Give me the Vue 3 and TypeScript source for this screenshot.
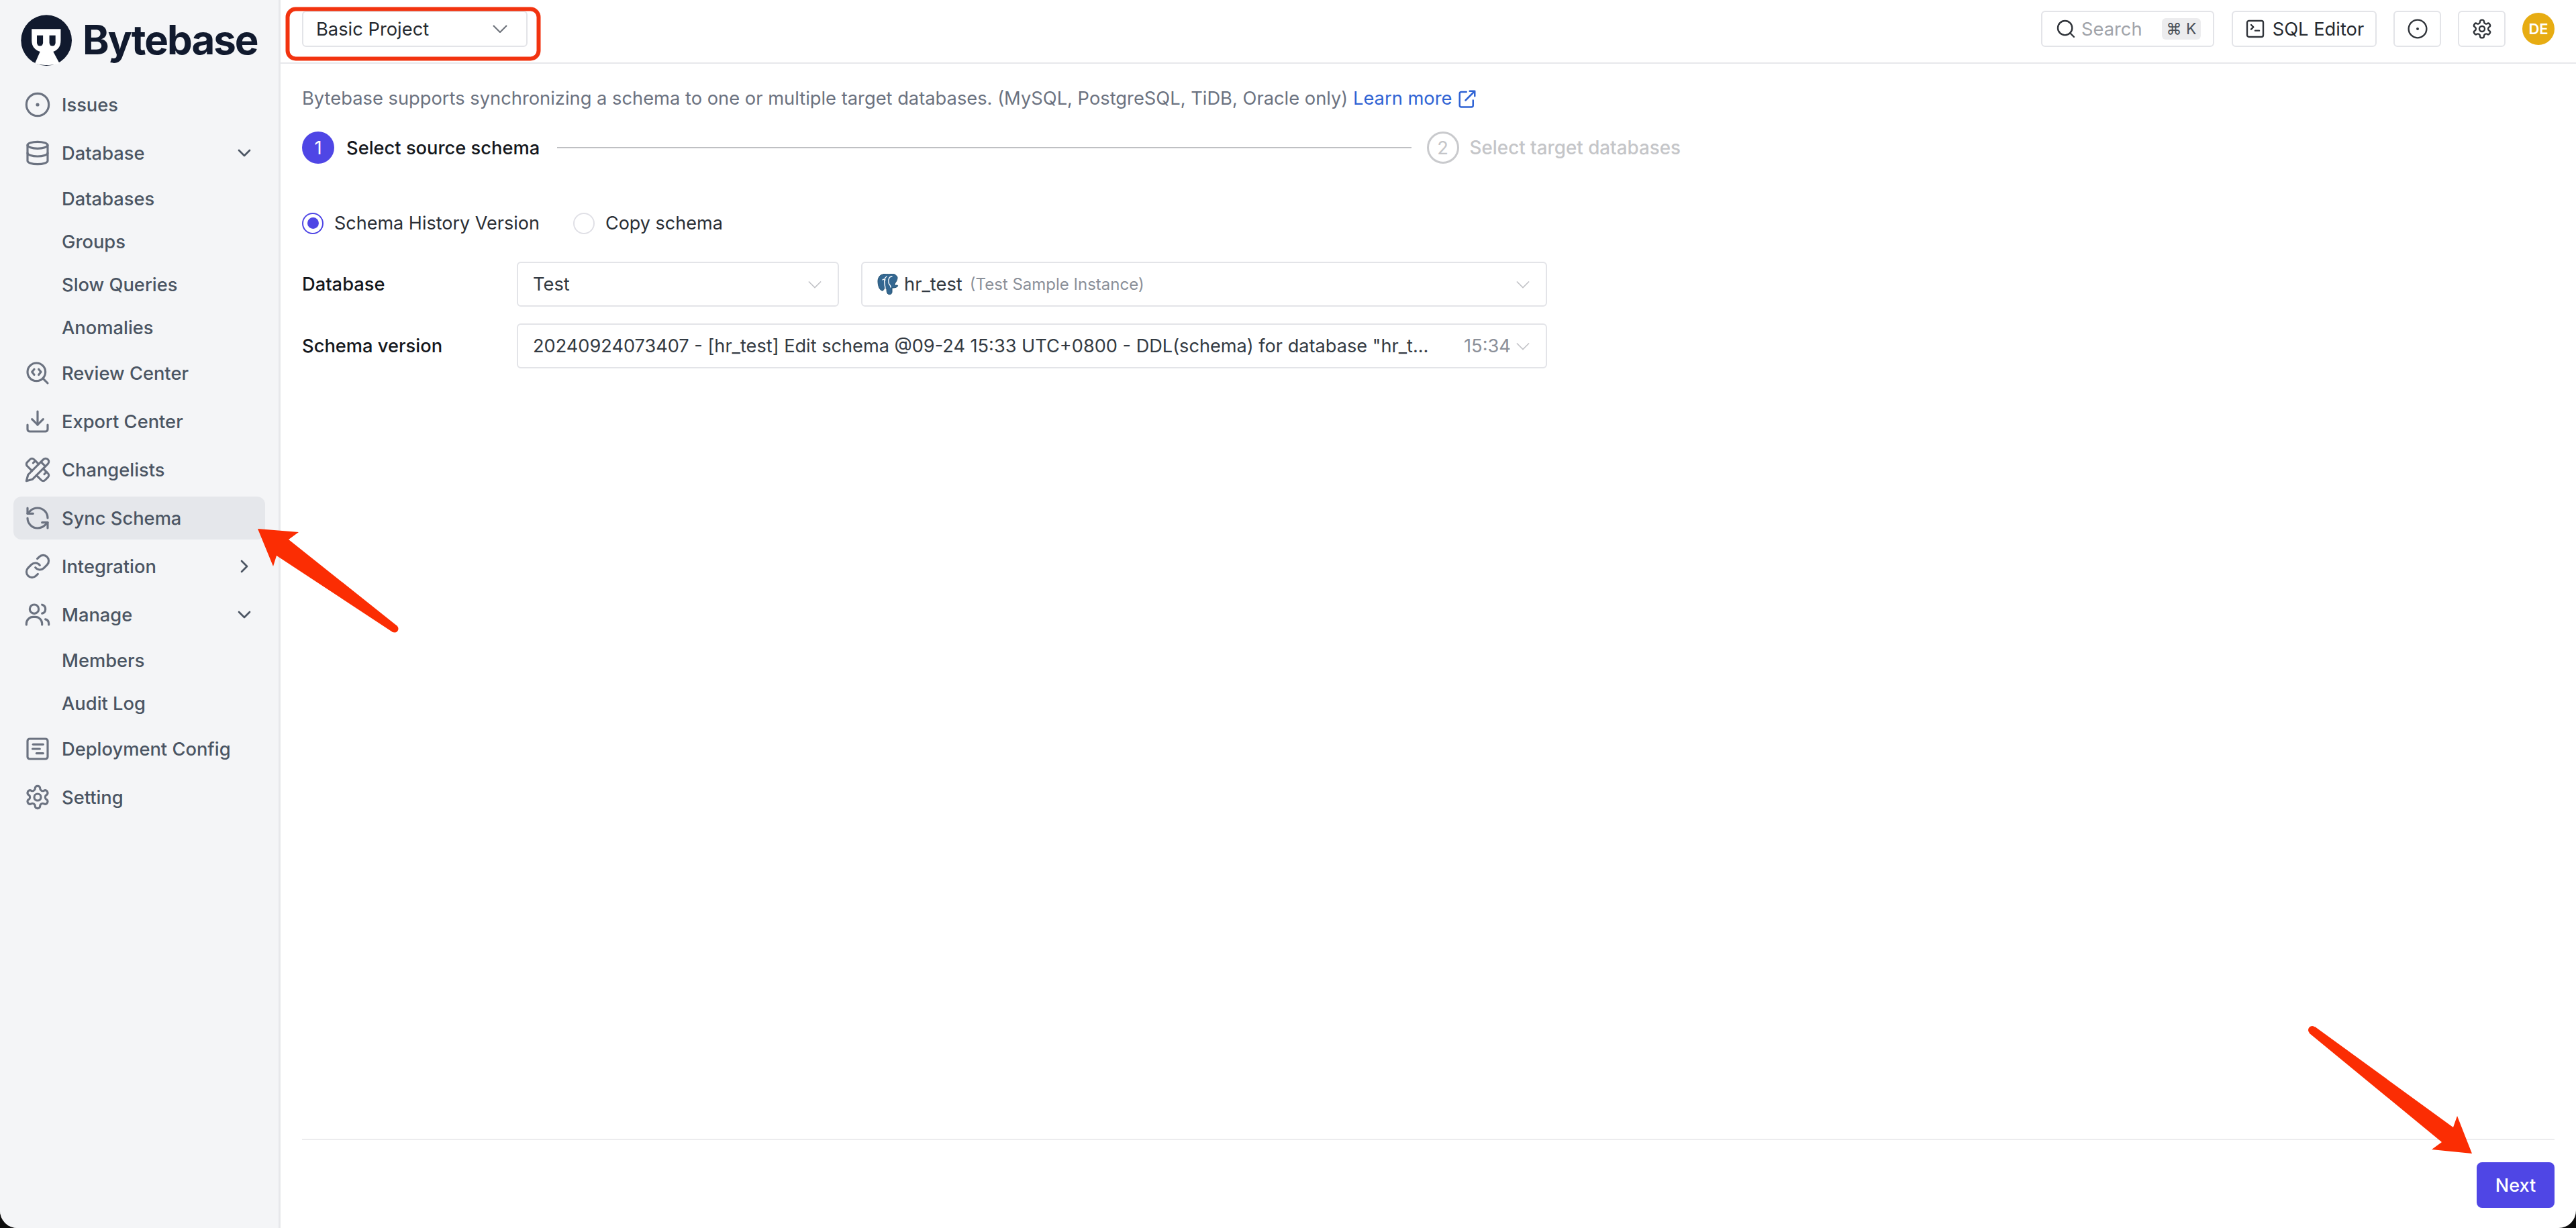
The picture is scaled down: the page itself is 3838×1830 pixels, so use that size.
<script setup lang="ts">
interface NavItem {
  label: string
  icon?: string
  chevron?: 'down' | 'right'
  active?: boolean
  sub?: string[]
}

const circle = (cx: number, cy: number, r: number): string =>
  `M${cx - r} ${cy}a${r} ${r} 0 1 0 ${2 * r} 0a${r} ${r} 0 1 0 ${-2 * r} 0`

const icons: Record<string, string[]> = {
  dot: [circle(12, 12, 10), circle(12, 12, 0.6)],
  database: ['M3 5a9 3 0 1 0 18 0a9 3 0 1 0-18 0', 'M3 5V19A9 3 0 0 0 21 19V5', 'M3 12A9 3 0 0 0 21 12'],
  review: ['m13 13.5 2-2.5-2-2.5', 'm21 21-4.3-4.3', 'M9 8.5 7 11l2 2.5', circle(11, 11, 8)],
  export: ['M21 15v4a2 2 0 0 1-2 2H5a2 2 0 0 1-2-2v-4', 'M7 10l5 5 5-5', 'M12 15V3'],
  change: [
    'm15 5 4 4',
    'M13 7 8.7 2.7a2.41 2.41 0 0 0-3.4 0L2.7 5.3a2.41 2.41 0 0 0 0 3.4L7 13',
    'm8 6 2-2',
    'm2 22 5.5-1.5L21.17 6.83a2.82 2.82 0 0 0-4-4L3.5 16.5Z',
    'm18 16 2-2',
    'm17 11 4.3 4.3c.94.94.94 2.46 0 3.4l-2.6 2.6c-.94.94-2.46.94-3.4 0L11 17',
  ],
  sync: [
    'M21 12a9 9 0 0 0-9-9 9.75 9.75 0 0 0-6.74 2.74L3 8',
    'M3 3v5h5',
    'M3 12a9 9 0 0 0 9 9 9.75 9.75 0 0 0 6.74-2.74L21 16',
    'M16 16h5v5',
  ],
  link: [
    'M10 13a5 5 0 0 0 7.54.54l3-3a5 5 0 0 0-7.07-7.07l-1.72 1.71',
    'M14 11a5 5 0 0 0-7.54-.54l-3 3a5 5 0 0 0 7.07 7.07l1.71-1.71',
  ],
  users: [
    'M2 21v-1a6 6 0 0 1 6-6h2a6 6 0 0 1 6 6v1',
    circle(9, 7, 4),
    'M22 21v-1a4 4 0 0 0-3-3.87',
    'M16 3.13a4 4 0 0 1 0 7.75',
  ],
  config: ['M5 3h14a2 2 0 0 1 2 2v14a2 2 0 0 1-2 2H5a2 2 0 0 1-2-2V5a2 2 0 0 1 2-2z', 'M8 8h9', 'M7.500 12h6.500', 'M11 16h6'],
  gear: [
    'M12.22 2h-.44a2 2 0 0 0-2 2v.18a2 2 0 0 1-1 1.73l-.43.25a2 2 0 0 1-2 0l-.15-.08a2 2 0 0 0-2.73.73l-.22.38a2 2 0 0 0 .73 2.73l.15.1a2 2 0 0 1 1 1.72v.51a2 2 0 0 1-1 1.74l-.15.09a2 2 0 0 0-.73 2.73l.22.38a2 2 0 0 0 2.73.73l.15-.08a2 2 0 0 1 2 0l.43.25a2 2 0 0 1 1 1.73V20a2 2 0 0 0 2 2h.44a2 2 0 0 0 2-2v-.18a2 2 0 0 1 1-1.73l.43-.25a2 2 0 0 1 2 0l.15.08a2 2 0 0 0 2.73-.73l.22-.39a2 2 0 0 0-.73-2.73l-.15-.08a2 2 0 0 1-1-1.74v-.5a2 2 0 0 1 1-1.74l.15-.09a2 2 0 0 0 .73-2.73l-.22-.38a2 2 0 0 0-2.73-.73l-.15.08a2 2 0 0 1-2 0l-.43-.25a2 2 0 0 1-1-1.73V4a2 2 0 0 0-2-2z',
    circle(12, 12, 3),
  ],
  search: [circle(11, 11, 8), 'm21 21-4.3-4.3'],
  terminal: ['M5 3h14a2 2 0 0 1 2 2v14a2 2 0 0 1-2 2H5a2 2 0 0 1-2-2V5a2 2 0 0 1 2-2z', 'm7.500 7.500 2.500 2.500-2.500 2.500', 'M12 14h4.500'],
}

const nav: NavItem[] = [
  { label: 'Issues', icon: 'dot' },
  { label: 'Database', icon: 'database', chevron: 'down', sub: ['Databases', 'Groups', 'Slow Queries', 'Anomalies'] },
  { label: 'Review Center', icon: 'review' },
  { label: 'Export Center', icon: 'export' },
  { label: 'Changelists', icon: 'change' },
  { label: 'Sync Schema', icon: 'sync', active: true },
  { label: 'Integration', icon: 'link', chevron: 'right' },
  { label: 'Manage', icon: 'users', chevron: 'down', sub: ['Members', 'Audit Log'] },
  { label: 'Deployment Config', icon: 'config' },
  { label: 'Setting', icon: 'gear' },
]

const versionText = '20240924073407 - [hr_test] Edit schema @09-24 15:33 UTC+0800 - DDL(schema) for database "hr_t...'
</script>

<template>
  <div class="app">
    <aside class="sidebar">
      <div class="brand">
        <svg class="logo" viewBox="37 37 225 225">
          <circle cx="150" cy="150" r="112" fill="#111a2e" />
          <path
            d="M85 100H213V150C213 178 200 192 180 200L207 250C190 262 115 262 100 250L122 200C100 192 85 178 85 150Z"
            fill="#fff"
          />
          <path d="M108 128H135V160A13.500 15 0 0 1 108 160Z" fill="#111a2e" />
          <path d="M163 128H190V160A13.500 15 0 0 1 163 160Z" fill="#111a2e" />
        </svg>
        <span class="brand-name">Bytebase</span>
      </div>
      <nav class="nav">
        <template v-for="item in nav" :key="item.label">
          <div class="nav-row" :class="{ active: item.active }">
            <svg class="nav-icon" viewBox="0 0 24 24">
              <path v-for="d in icons[item.icon ?? 'dot']" :key="d" :d="d" />
            </svg>
            <span class="nav-label">{{ item.label }}</span>
            <svg v-if="item.chevron" class="nav-chevron" viewBox="0 0 24 24">
              <path :d="item.chevron === 'down' ? 'm6 9 6 6 6-6' : 'm9 6 6 6-6 6'" />
            </svg>
          </div>
          <div v-if="item.sub" class="nav-sub">
            <div v-for="s in item.sub" :key="s" class="sub-row">{{ s }}</div>
          </div>
        </template>
      </nav>
    </aside>

    <main class="main">
      <header class="topbar">
        <div class="project">
          <span>Basic Project</span>
          <svg class="caret caret-dark" viewBox="0 0 22 12"><path d="M1 1l10 10L21 1" /></svg>
        </div>
        <div class="top-actions">
          <div class="btn search">
            <svg class="btn-icon" viewBox="0 0 24 24"><path v-for="d in icons.search" :key="d" :d="d" /></svg>
            <span class="search-text">Search</span>
            <kbd class="kbd">⌘ K</kbd>
          </div>
          <div class="btn sql">
            <svg class="btn-icon" viewBox="0 0 24 24"><path v-for="d in icons.terminal" :key="d" :d="d" /></svg>
            <span>SQL Editor</span>
          </div>
          <div class="btn square">
            <svg class="btn-icon" viewBox="0 0 24 24"><path v-for="d in icons.dot" :key="d" :d="d" /></svg>
          </div>
          <div class="btn square">
            <svg class="btn-icon" viewBox="0 0 24 24"><path v-for="d in icons.gear" :key="d" :d="d" /></svg>
          </div>
          <div class="avatar">DE</div>
        </div>
      </header>

      <section class="content">
        <p class="desc">
          Bytebase supports synchronizing a schema to one or multiple target databases. (MySQL, PostgreSQL, TiDB, Oracle
          only)
          <a class="learn">Learn more
            <svg class="ext" viewBox="0 0 24 24">
              <path d="M11 4H5a2 2 0 0 0-2 2v14a2 2 0 0 0 2 2h12a2 2 0 0 0 2-2v-6" />
              <path d="M10 14 21 3M15 3h6v6" />
            </svg>
          </a>
        </p>

        <div class="steps">
          <div class="step-num current">1</div>
          <span class="step-label">Select source schema</span>
          <div class="step-line"></div>
          <div class="step-num pending">2</div>
          <span class="step-label muted">Select target databases</span>
        </div>

        <div class="radios">
          <label class="radio">
            <span class="radio-mark checked"></span>
            <span>Schema History Version</span>
          </label>
          <label class="radio">
            <span class="radio-mark"></span>
            <span>Copy schema</span>
          </label>
        </div>

        <div class="form">
          <span class="form-label">Database</span>
          <div class="form-fields">
            <div class="select env">
              <span class="select-text">Test</span>
              <svg class="caret" viewBox="0 0 22 12"><path d="M1 1l10 10L21 1" /></svg>
            </div>
            <div class="select db">
              <span class="select-text db-text">
                <svg class="pg" viewBox="0 0 32 32">
                  <path
                    d="M9 1C4 1 1 6 1 11c0 6 2 13 6 14 2 1 3-2 4-4 1 1 2 1 3 1 0 3 0 7 2 8 3 2 6 0 6-3v-6c2 0 6 0 8-2 1-1 1-2-1-2-2 1-3 0-3-2 2-3 4-6 4-9 0-3-4-6-9-6-2 0-3 0-4 1-2-1-5-1-8-1z"
                    fill="#336791"
                    stroke="#23506f"
                  />
                  <path
                    d="M14 4c-3 2-4 6-3 11 0 2 1 5 1 7M22 4c-4 0-6 4-5 9 0 3 3 3 3 7M8 9c1-1 3-1 4 0"
                    fill="none"
                    stroke="#fff"
                    stroke-width="1.400"
                    stroke-linecap="round"
                  />
                </svg>
                <span>hr_test</span>
                <span class="instance">(Test Sample Instance)</span>
              </span>
              <svg class="caret" viewBox="0 0 22 12"><path d="M1 1l10 10L21 1" /></svg>
            </div>
          </div>
          <span class="form-label">Schema version</span>
          <div class="select version">
            <span class="version-text">{{ versionText }}</span>
            <span class="time">15:34</span>
            <svg class="caret caret-near" viewBox="0 0 22 12"><path d="M1 1l10 10L21 1" /></svg>
          </div>
        </div>

        <footer class="footer">
          <button class="next" type="button">Next</button>
        </footer>
      </section>
    </main>

    <svg class="marks" viewBox="0 0 3838 1830">
      <rect x="428.500" y="13.500" width="374" height="74" rx="12" class="mark-box" />
      <polygon points="384,788 445,793 430,804 592,933 585,942 412,828 407,844" class="mark-arrow" />
      <circle cx="588" cy="937" r="5.500" class="mark-arrow" />
      <polygon
        points="3449,1530 3655,1680 3661,1663 3683,1719 3623,1713 3638,1702 3441,1540"
        class="mark-arrow"
      />
      <circle cx="3445" cy="1535" r="6" class="mark-arrow" />
    </svg>
  </div>
</template>

<style>
html,
body {
  background: #0d0d0d;
  margin: 0;
}
</style>

<style scoped>
.app {
  position: relative;
  display: flex;
  width: 3838px;
  height: 1830px;
  overflow: hidden;
  background: #fff;
  border-radius: 0 0 26px 26px;
  font-family: Inter, 'Liberation Sans', sans-serif;
  font-size: 27.300px;
  color: #1f2329;
}

.sidebar {
  width: 415px;
  flex: none;
  background: #f4f5f7;
  border-right: 3px solid #e7e8eb;
}

.brand {
  display: flex;
  align-items: center;
  gap: 16px;
  height: 120px;
  padding-left: 31px;
  box-sizing: border-box;
}

.logo {
  width: 76px;
  height: 76px;
  flex: none;
  margin-top: -1px;
}

.brand-name {
  font-size: 60px;
  font-weight: 700;
  letter-spacing: -2px;
  color: #111a2e;
  margin-top: -2px;
}

.nav {
  display: flex;
  flex-direction: column;
  gap: 8px;
  padding: 4px 20px 0 20px;
}

.nav-row {
  display: flex;
  align-items: center;
  height: 64px;
  padding: 0 15px 0 16px;
  border-radius: 12px;
  color: #4b5563;
  font-weight: 500;
}

.nav-row.active {
  background: #e5e7eb;
}

.nav-icon {
  width: 40px;
  height: 40px;
  flex: none;
  fill: none;
  stroke: #6b7280;
  stroke-width: 1.900;
  stroke-linecap: round;
  stroke-linejoin: round;
}

.nav-label {
  margin-left: 16px;
  flex: 1;
}

.nav-chevron {
  width: 32px;
  height: 32px;
  fill: none;
  stroke: #4b5563;
  stroke-width: 2;
  stroke-linecap: round;
  stroke-linejoin: round;
}

.nav-sub {
  margin: -4px 0;
}

.sub-row {
  display: flex;
  align-items: center;
  height: 64px;
  padding-left: 72px;
  color: #4b5563;
  font-weight: 500;
}

.main {
  flex: 1;
  min-width: 0;
  display: flex;
  flex-direction: column;
}

.topbar {
  display: flex;
  align-items: center;
  height: 95px;
  flex: none;
  box-sizing: border-box;
  padding: 0 32px 7px 32px;
  border-bottom: 2px solid #e7e8eb;
}

.project {
  display: flex;
  align-items: center;
  justify-content: space-between;
  width: 336px;
  height: 54px;
  padding: 0 28px 0 19px;
  box-sizing: border-box;
  border: 2px solid #e3e4e8;
  border-radius: 6px;
  color: #262a30;
}

.caret {
  width: 20px;
  height: 12px;
  flex: none;
  fill: none;
  stroke: #c2c3c7;
  stroke-width: 1.800;
}

.caret-dark {
  width: 22px;
  stroke: #70757d;
  stroke-width: 2.200;
}

.top-actions {
  margin-left: auto;
  display: flex;
  align-items: center;
}

.btn {
  display: flex;
  align-items: center;
  justify-content: center;
  height: 54px;
  box-sizing: border-box;
  border: 2px solid #e3e4e8;
  border-radius: 6px;
  color: #262a30;
}

.btn-icon {
  width: 32px;
  height: 32px;
  flex: none;
  fill: none;
  stroke: #30343a;
  stroke-width: 1.800;
  stroke-linecap: round;
  stroke-linejoin: round;
}

.search {
  width: 258px;
  justify-content: flex-start;
  padding: 0 18px 0 19px;
}

.search-text {
  margin-left: 7px;
  color: #a1a4aa;
}

.kbd {
  margin-left: auto;
  display: flex;
  align-items: center;
  justify-content: center;
  width: 58px;
  height: 32px;
  background: #ececee;
  border-radius: 6px;
  color: #4b5058;
  font-family: Inter, 'DejaVu Sans', sans-serif;
  font-size: 23px;
}

.sql {
  width: 216px;
  margin-left: 26px;
  gap: 10px;
}

.square {
  width: 71px;
  margin-left: 25px;
}

.avatar {
  width: 48px;
  height: 48px;
  margin-left: 25px;
  border-radius: 50%;
  background: #e7ac12;
  color: #fff;
  font-size: 22px;
  font-weight: 600;
  display: flex;
  align-items: center;
  justify-content: center;
}

.content {
  flex: 1;
  min-height: 0;
  display: flex;
  flex-direction: column;
  padding: 32px 32px 30px 32px;
}

.desc {
  margin: 0;
  line-height: 40px;
  color: #6b7280;
  white-space: nowrap;
}

.learn {
  color: #2f63d4;
  display: inline-flex;
  align-items: center;
  gap: 8px;
}

.ext {
  width: 30px;
  height: 30px;
  fill: none;
  stroke: #2f63d4;
  stroke-width: 2;
  stroke-linecap: round;
  stroke-linejoin: round;
}

.steps {
  display: flex;
  align-items: center;
  width: 2054px;
  margin-top: 29px;
  height: 48px;
}

.step-num {
  width: 48px;
  height: 48px;
  flex: none;
  box-sizing: border-box;
  border-radius: 50%;
  display: flex;
  align-items: center;
  justify-content: center;
}

.step-num.current {
  background: #4f46e5;
  color: #fff;
}

.step-num.pending {
  border: 3px solid #c9cacd;
  color: #c4c5c8;
}

.step-label {
  margin-left: 18px;
  font-weight: 500;
  white-space: nowrap;
  color: #14171c;
}

.step-label.muted {
  margin-left: 16px;
  font-size: 27.800px;
  color: #c4c5c8;
}

.step-line {
  flex: 1;
  height: 2px;
  margin: 0 23px 0 26px;
  background: #bfc0c3;
}

.radios {
  display: flex;
  align-items: center;
  gap: 50px;
  margin-top: 72px;
  font-size: 27px;
}

.radio {
  display: flex;
  align-items: center;
  gap: 16px;
  color: #2a2e35;
}

.radio-mark {
  width: 32px;
  height: 32px;
  box-sizing: border-box;
  border: 2px solid #e0e0e6;
  border-radius: 50%;
  flex: none;
  display: flex;
  align-items: center;
  justify-content: center;
}

.radio-mark.checked {
  border-color: #4f46e5;
}

.radio-mark.checked::after {
  content: '';
  width: 17px;
  height: 17px;
  border-radius: 50%;
  background: #4f46e5;
}

.form {
  display: grid;
  grid-template-columns: 320px 1535px;
  row-gap: 25px;
  align-items: center;
  margin-top: 41px;
}

.form-label {
  font-weight: 500;
  color: #14171c;
}

.form-fields {
  display: flex;
  gap: 33px;
}

.select {
  display: flex;
  align-items: center;
  height: 67px;
  box-sizing: border-box;
  padding: 0 24px 0 22px;
  border: 2px solid #e3e4e8;
  border-radius: 6px;
}

.env {
  width: 480px;
}

.db {
  flex: 1;
}

.select-text {
  flex: 1;
  min-width: 0;
  color: #333a42;
}

.db-text {
  display: flex;
  align-items: center;
}

.pg {
  width: 32px;
  height: 32px;
  flex: none;
  margin-right: 8px;
}

.instance {
  margin-left: 11px;
  font-size: 24px;
  color: #8b9099;
}

.version-text {
  white-space: nowrap;
  font-size: 27.150px;
  color: #333a42;
}

.time {
  margin-left: auto;
  color: #8b9099;
  flex: none;
}

.caret-near {
  margin-left: 8px;
}

.footer {
  margin-top: auto;
  display: flex;
  justify-content: flex-end;
  padding-top: 33px;
  border-top: 2px solid #ececee;
}

.next {
  width: 116px;
  height: 68px;
  border: none;
  border-radius: 8px;
  background: #4f46e5;
  color: #fff;
  font-family: inherit;
  font-size: 27px;
  font-weight: 500;
}

.marks {
  position: absolute;
  inset: 0;
  width: 3838px;
  height: 1830px;
  pointer-events: none;
}

.mark-box {
  fill: none;
  stroke: #f2330f;
  stroke-width: 6;
}

.mark-arrow {
  fill: #fb2d03;
}
</style>
